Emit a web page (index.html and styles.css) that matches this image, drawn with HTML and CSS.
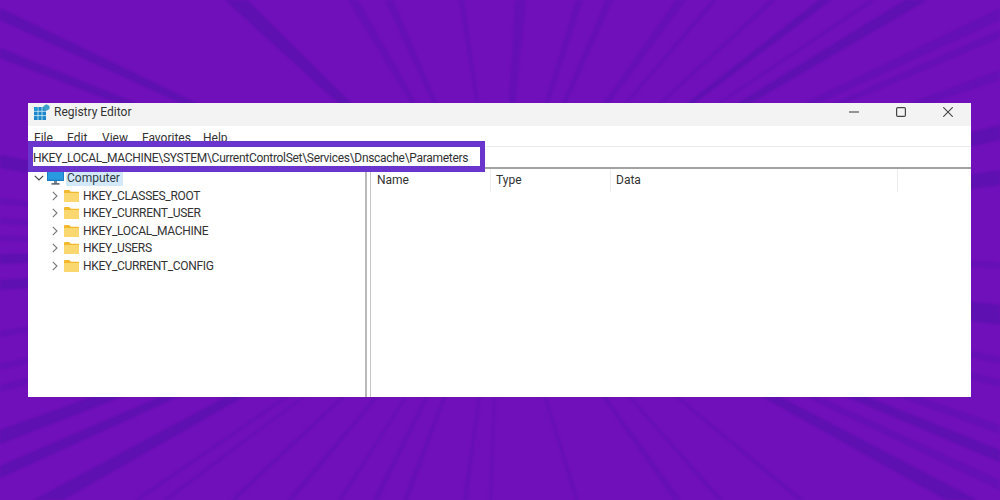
FILE: index.html
```html
<!DOCTYPE html>
<html lang="en">
<head>
<meta charset="utf-8">
<title>Registry Editor</title>
<link rel="stylesheet" href="styles.css">
</head>
<body>
<main class="stage">
  <svg class="rays" viewBox="0 0 1000 500" width="1000" height="500" aria-hidden="true">
    <g class="ray-strong">
      <polygon points="500,250 225,0 247,0"/>
      <polygon points="500,250 819,0 831,0"/>
      <polygon points="500,250 905,0 927,0"/>
      <polygon points="500,250 1000,125 1000,140"/>
      <polygon points="500,250 1000,170 1000,185"/>
      <polygon points="500,250 1000,305 1000,325"/>
      <polygon points="500,250 0,155 0,168"/>
      <polygon points="500,250 0,254 0,264"/>
      <polygon points="500,250 0,280 0,290"/>
      <polygon points="500,250 0,518 0,536"/>
      <polygon points="500,250 1000,512 1000,530"/>
      <polygon points="500,250 1000,450 1000,462"/>
      <polygon points="500,250 0,8 0,20"/>
      <polygon points="500,250 0,48 0,58"/>
      <polygon points="500,250 0,430 0,444"/>
      <polygon points="500,250 0,466 0,478"/>
    </g>
    <g class="ray-soft">
      <polygon points="500,250 348,0 358,0"/>
      <polygon points="500,250 385,0 393,0"/>
      <polygon points="500,250 459,0 464,0"/>
      <polygon points="500,250 515,0 526,0"/>
      <polygon points="500,250 576,0 583,0"/>
      <polygon points="500,250 606,0 613,0"/>
      <polygon points="500,250 676,0 686,0"/>
      <polygon points="500,250 712,0 717,0"/>
      <polygon points="500,250 770,0 776,0"/>
      <polygon points="500,250 870,0 876,0"/>
      <polygon points="500,250 1000,8 1000,20"/>
      <polygon points="500,250 1000,30 1000,38"/>
      <polygon points="500,250 1000,70 1000,80"/>
      <polygon points="500,250 1000,262 1000,268"/>
      <polygon points="500,250 1000,357 1000,364"/>
      <polygon points="500,250 1000,380 1000,387"/>
      <polygon points="500,250 1000,425 1000,434"/>
      <polygon points="500,250 1000,480 1000,490"/>
      <polygon points="500,250 0,198 0,204"/>
      <polygon points="500,250 0,218 0,224"/>
      <polygon points="500,250 0,236 0,241"/>
      <polygon points="500,250 0,331 0,337"/>
      <polygon points="500,250 0,364 0,370"/>
      <polygon points="500,250 0,385 0,392"/>
      <polygon points="500,250 134,500 140,500"/>
      <polygon points="500,250 163,500 168,500"/>
      <polygon points="500,250 230,500 236,500"/>
      <polygon points="500,250 287,500 293,500"/>
      <polygon points="500,250 338,500 342,500"/>
      <polygon points="500,250 373,500 378,500"/>
      <polygon points="500,250 403,500 408,500"/>
      <polygon points="500,250 463,500 467,500"/>
      <polygon points="500,250 489,500 492,500"/>
      <polygon points="500,250 575,500 579,500"/>
      <polygon points="500,250 674,500 681,500"/>
      <polygon points="500,250 718,500 723,500"/>
      <polygon points="500,250 798,500 804,500"/>
    </g>
  </svg>

  <section class="window">
    <header class="titlebar">
      <svg class="app-icon" viewBox="0 0 16 16" width="16" height="16" aria-hidden="true">
        <rect x="0" y="3" width="12" height="13" fill="#1b86c9"/>
        <path d="M4 3v13M8 3v13M0 7.3h12M0 11.6h12" stroke="#d5edf8" stroke-width="0.8" fill="none"/>
        <rect x="0.5" y="3.5" width="3" height="3.3" fill="#1f9bd8"/>
        <path d="M12.5 0.3l3 1.7v3l-3 1.7-3-1.7v-3z" fill="#3f9fc8"/>
      </svg>
      <span class="app-title">Registry Editor</span>
      <div class="controls">
        <svg class="ctl" viewBox="0 0 10 10" width="10" height="10" aria-hidden="true"><path d="M0 5h10" stroke="#555" stroke-width="1.2"/></svg>
        <svg class="ctl" viewBox="0 0 10 10" width="10" height="10" aria-hidden="true"><rect x="0.6" y="0.6" width="8.8" height="8.8" rx="1.2" fill="none" stroke="#444" stroke-width="1.2"/></svg>
        <svg class="ctl" viewBox="0 0 10 10" width="10" height="10" aria-hidden="true"><path d="M0.3 0.3l9.4 9.4M9.7 0.3L0.3 9.7" stroke="#444" stroke-width="1.1"/></svg>
      </div>
    </header>

    <nav class="menubar">
      <span class="menu-file">File</span>
      <span class="menu-edit">Edit</span>
      <span class="menu-view">View</span>
      <span class="menu-fav">Favorites</span>
      <span>Help</span>
    </nav>

    <div class="address">HKEY_LOCAL_MACHINE\SYSTEM\CurrentControlSet\Services\Dnscache\Parameters</div>

    <div class="panes">
      <aside class="tree">
        <div class="row root">
          <svg class="chev-down" viewBox="0 0 10 6" width="10" height="6" aria-hidden="true"><path d="M0.8 0.8L5 5l4.2-4.2" fill="none" stroke="#444" stroke-width="1.2"/></svg>
          <svg class="pc" viewBox="0 0 17 15" width="17" height="15" aria-hidden="true">
            <rect x="0" y="0" width="17" height="11" rx="0.6" fill="#1c7fc4"/>
            <rect x="1" y="1" width="15" height="8.6" fill="#2a9ae0"/>
            <rect x="7" y="11" width="3" height="2.6" fill="#7a8a96"/>
            <rect x="4.5" y="13.2" width="8" height="1.4" fill="#45525c"/>
          </svg>
          <span class="label-root">Computer</span>
        </div>
        <div class="row child">
          <svg class="chev" viewBox="0 0 6 10" width="6" height="10" aria-hidden="true"><path d="M0.8 0.8L5 5 0.8 9.2" fill="none" stroke="#777" stroke-width="1.1"/></svg>
          <svg class="folder" viewBox="0 0 15 12" width="15" height="12" aria-hidden="true"><path d="M0 1.2C0 .5.5 0 1.2 0h4L7 1.8h7c.6 0 1 .4 1 1V11c0 .6-.4 1-1 1H1c-.6 0-1-.4-1-1z" fill="#f2b92f"/><rect x="0" y="3" width="15" height="9" rx="0.8" fill="#fad86f"/></svg>
          <span>HKEY_CLASSES_ROOT</span>
        </div>
        <div class="row child">
          <svg class="chev" viewBox="0 0 6 10" width="6" height="10" aria-hidden="true"><path d="M0.8 0.8L5 5 0.8 9.2" fill="none" stroke="#777" stroke-width="1.1"/></svg>
          <svg class="folder" viewBox="0 0 15 12" width="15" height="12" aria-hidden="true"><path d="M0 1.2C0 .5.5 0 1.2 0h4L7 1.8h7c.6 0 1 .4 1 1V11c0 .6-.4 1-1 1H1c-.6 0-1-.4-1-1z" fill="#f2b92f"/><rect x="0" y="3" width="15" height="9" rx="0.8" fill="#fad86f"/></svg>
          <span>HKEY_CURRENT_USER</span>
        </div>
        <div class="row child">
          <svg class="chev" viewBox="0 0 6 10" width="6" height="10" aria-hidden="true"><path d="M0.8 0.8L5 5 0.8 9.2" fill="none" stroke="#777" stroke-width="1.1"/></svg>
          <svg class="folder" viewBox="0 0 15 12" width="15" height="12" aria-hidden="true"><path d="M0 1.2C0 .5.5 0 1.2 0h4L7 1.8h7c.6 0 1 .4 1 1V11c0 .6-.4 1-1 1H1c-.6 0-1-.4-1-1z" fill="#f2b92f"/><rect x="0" y="3" width="15" height="9" rx="0.8" fill="#fad86f"/></svg>
          <span>HKEY_LOCAL_MACHINE</span>
        </div>
        <div class="row child">
          <svg class="chev" viewBox="0 0 6 10" width="6" height="10" aria-hidden="true"><path d="M0.8 0.8L5 5 0.8 9.2" fill="none" stroke="#777" stroke-width="1.1"/></svg>
          <svg class="folder" viewBox="0 0 15 12" width="15" height="12" aria-hidden="true"><path d="M0 1.2C0 .5.5 0 1.2 0h4L7 1.8h7c.6 0 1 .4 1 1V11c0 .6-.4 1-1 1H1c-.6 0-1-.4-1-1z" fill="#f2b92f"/><rect x="0" y="3" width="15" height="9" rx="0.8" fill="#fad86f"/></svg>
          <span>HKEY_USERS</span>
        </div>
        <div class="row child">
          <svg class="chev" viewBox="0 0 6 10" width="6" height="10" aria-hidden="true"><path d="M0.8 0.8L5 5 0.8 9.2" fill="none" stroke="#777" stroke-width="1.1"/></svg>
          <svg class="folder" viewBox="0 0 15 12" width="15" height="12" aria-hidden="true"><path d="M0 1.2C0 .5.5 0 1.2 0h4L7 1.8h7c.6 0 1 .4 1 1V11c0 .6-.4 1-1 1H1c-.6 0-1-.4-1-1z" fill="#f2b92f"/><rect x="0" y="3" width="15" height="9" rx="0.8" fill="#fad86f"/></svg>
          <span>HKEY_CURRENT_CONFIG</span>
        </div>
      </aside>
      <div class="splitter"></div>
      <section class="list">
        <div class="list-head">
          <span class="col col-name">Name</span>
          <span class="col col-type">Type</span>
          <span class="col col-data">Data</span>
        </div>
      </section>
    </div>

    <div class="highlight"></div>
  </section>
</main>
</body>
</html>
```
FILE: styles.css
```css
* { box-sizing: border-box; }

html, body { margin: 0; padding: 0; }

body {
  width: 1000px;
  height: 500px;
  overflow: hidden;
  font-family: Roboto, "Noto Sans", "Liberation Sans", sans-serif;
  font-size: 12px;
  color: #2b2b2b;
}

.stage {
  position: relative;
  width: 1000px;
  height: 500px;
  padding: 103px 29px 103px 28px;
  background: #7010bb;
  overflow: hidden;
}

.rays {
  position: absolute;
  left: 0;
  top: 0;
  filter: blur(0.8px);
}

.ray-strong { fill: #4c10a8; fill-opacity: 0.5; }
.ray-soft { fill: #4c10a8; fill-opacity: 0.28; }

.window {
  position: relative;
  width: 943px;
  height: 294px;
  display: flex;
  flex-direction: column;
  background: #fff;
}

.titlebar {
  flex: 0 0 23px;
  display: flex;
  align-items: center;
  padding: 0 0 5px 6px;
  background: #f3f3f3;
}

.app-icon { flex: none; margin-right: 4px; }
.app-title { font-size: 12px; color: #333; }

.controls {
  margin-left: auto;
  display: flex;
  align-items: center;
  gap: 37px;
  padding-right: 18px;
}

.ctl { display: block; }

.menubar {
  flex: 0 0 20px;
  display: flex;
  align-items: center;
  padding: 3px 0 0 6px;
  font-size: 12px;
  color: #333;
  background: #fff;
}

.menu-file { width: 33px; }
.menu-edit { width: 35px; }
.menu-view { width: 40px; }
.menu-fav { width: 61px; }

.address {
  flex: 0 0 22px;
  padding: 2px 0 0 5px;
  line-height: 18px;
  font-size: 12px;
  letter-spacing: -0.3px;
  color: #333;
  white-space: nowrap;
  border-top: 1px solid #ececec;
  border-bottom: 2px solid #a2a2a2;
}

.panes {
  flex: 1;
  display: flex;
  min-height: 0;
}

.tree {
  width: 337px;
  padding-top: 0.5px;
}

.row {
  height: 17.5px;
  display: flex;
  align-items: center;
  white-space: nowrap;
}

.root { padding-left: 6px; }
.chev-down { flex: none; margin-right: 3px; }
.pc { flex: none; margin-right: 2px; margin-top: -2px; }
.label-root {
  background: #d3e9fa;
  padding: 0 3px 0 1px;
  line-height: 16px;
  color: #2f3b46;
}

.child { padding-left: 24px; color: #333; letter-spacing: -0.3px; }
.chev { flex: none; margin-right: 6px; }
.folder { flex: none; margin-right: 4px; }

.splitter {
  width: 6px;
  border-left: 2px solid #b9b9b9;
  border-right: 1px solid #c4c4c4;
}

.list { flex: 1; }

.list-head {
  display: flex;
  height: 23px;
}

.col {
  padding-left: 6px;
  line-height: 23px;
  color: #333;
  border-right: 1px solid #ececec;
}

.col-name { width: 120px; }
.col-type { width: 120px; padding-left: 5px; }
.col-data { width: 287px; padding-left: 5px; }

.highlight {
  position: absolute;
  left: 0;
  top: 38px;
  width: 457px;
  height: 31px;
  border: 6px solid #6a35cc;
  border-left-width: 5px;
  border-right-width: 5px;
}
```
